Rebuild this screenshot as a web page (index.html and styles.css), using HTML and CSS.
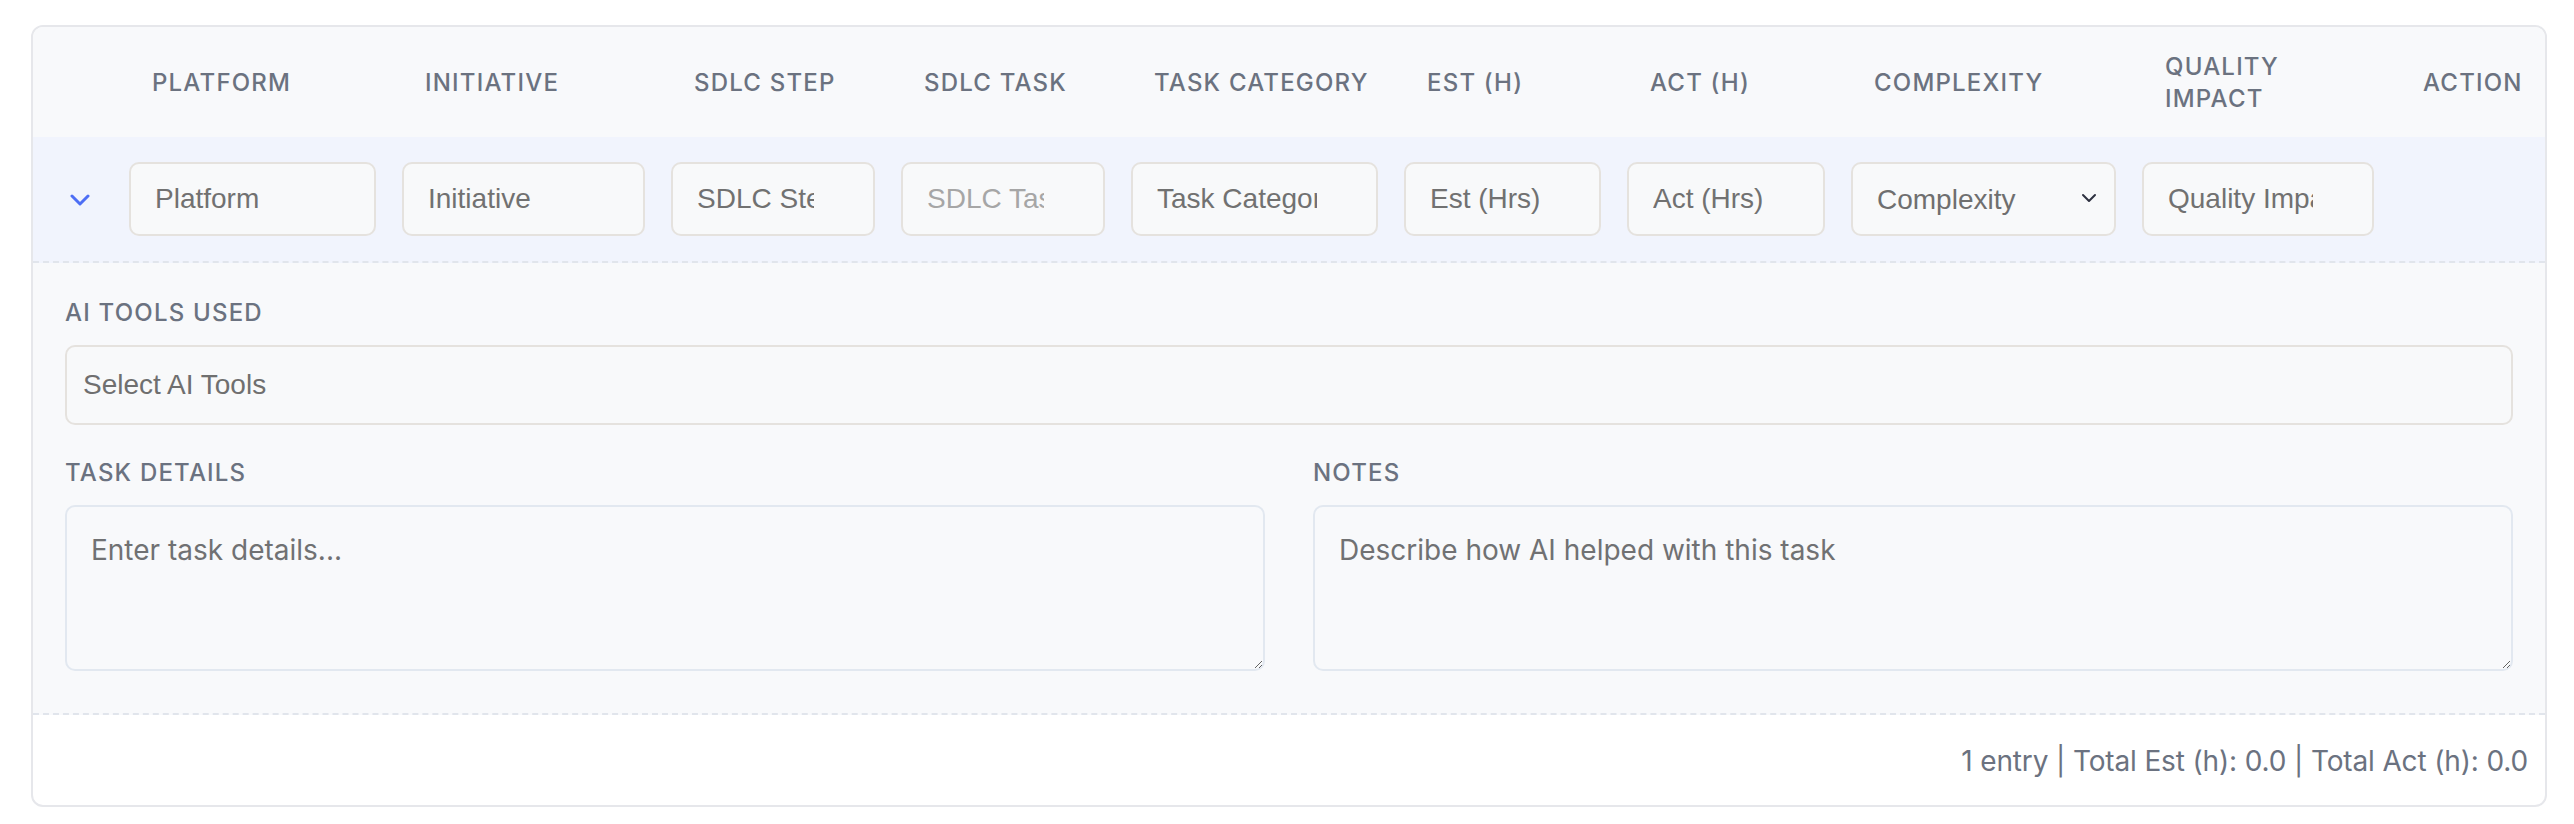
FILE: index.html
```html
<!DOCTYPE html>
<html lang="en">
<head>
<meta charset="utf-8">
<title>Task Entries</title>
<link rel="stylesheet" href="styles.css">
</head>
<body>
<div class="page">
  <div class="card">
    <div class="grid thead">
      <div class="th th-empty"></div>
      <div class="th">Platform</div>
      <div class="th">Initiative</div>
      <div class="th">SDLC Step</div>
      <div class="th">SDLC Task</div>
      <div class="th">Task Category</div>
      <div class="th">Est (h)</div>
      <div class="th">Act (h)</div>
      <div class="th">Complexity</div>
      <div class="th">Quality<br>Impact</div>
      <div class="th">Action</div>
    </div>
    <div class="grid row">
      <div class="td toggle">
        <svg class="toggle-icon" width="20" height="12" viewBox="0 0 20 12" aria-hidden="true"><polyline points="2,2 10,10 18,2" fill="none" stroke="#4d6ef5" stroke-width="3" stroke-linecap="round" stroke-linejoin="round"/></svg>
      </div>
      <div class="td"><input class="field" type="text" placeholder="Platform"></div>
      <div class="td"><input class="field" type="text" placeholder="Initiative"></div>
      <div class="td"><input class="field" type="text" placeholder="SDLC Step"></div>
      <div class="td"><input class="field field-disabled" type="text" placeholder="SDLC Task" disabled></div>
      <div class="td"><input class="field" type="text" placeholder="Task Category"></div>
      <div class="td"><input class="field" type="text" placeholder="Est (Hrs)"></div>
      <div class="td"><input class="field" type="text" placeholder="Act (Hrs)"></div>
      <div class="td">
        <div class="select-wrap">
          <select class="field select">
            <option>Complexity</option>
            <option>Low</option>
            <option>Medium</option>
            <option>High</option>
          </select>
          <svg class="select-icon" width="16" height="10" viewBox="0 0 16 10" aria-hidden="true"><polyline points="2,2 8,8 14,2" fill="none" stroke="#2e3140" stroke-width="2" stroke-linecap="round" stroke-linejoin="round"/></svg>
        </div>
      </div>
      <div class="td"><input class="field" type="text" placeholder="Quality Impact"></div>
      <div class="td"></div>
    </div>
    <div class="details">
      <label class="label">AI Tools Used</label>
      <div class="multi">Select AI Tools</div>
      <div class="two">
        <div class="col">
          <label class="label">Task Details</label>
          <textarea class="area" placeholder="Enter task details..."></textarea>
        </div>
        <div class="col">
          <label class="label">Notes</label>
          <textarea class="area" placeholder="Describe how AI helped with this task"></textarea>
        </div>
      </div>
    </div>
    <div class="footer">1 entry | Total Est (h): 0.0 | Total Act (h): 0.0</div>
  </div>
</div>
</body>
</html>
```

FILE: styles.css
```css
* {
  box-sizing: border-box;
}

body {
  margin: 0;
  background: #ffffff;
  font-family: Inter, "Liberation Sans", sans-serif;
}

.page {
  padding: 25px 27px 17px 31px;
}

.card {
  border: 2px solid #e6e7eb;
  border-radius: 12px;
  overflow: hidden;
  background: #ffffff;
}

.grid {
  display: grid;
  grid-template-columns: 83px 273px 269px 230px 230px 273px 223px 224px 291px 258px 1fr;
}

.thead {
  background: #f8f9fb;
  height: 110px;
  padding-top: 2px;
  align-items: center;
}

.th {
  padding-left: 36px;
  font-size: 24px;
  line-height: 32px;
  letter-spacing: 0.05em;
  text-transform: uppercase;
  color: #6b7280;
  font-weight: 500;
  white-space: nowrap;
}

.row {
  background: #f1f4fd;
  height: 126px;
  border-bottom: 2px dashed #e1e5ec;
  align-items: center;
}

.td {
  padding: 0 13px;
}

.toggle {
  padding-left: 37px;
  padding-top: 2px;
  display: flex;
  align-items: center;
}

.toggle-icon {
  display: block;
}

.field {
  display: block;
  width: 100%;
  height: 74px;
  border: 2px solid #e5e2de;
  border-radius: 10px;
  background: #f8f9fa;
  padding: 0 59px 0 24px;
  font-family: "Liberation Sans", Arial, sans-serif;
  font-size: 28px;
  color: #6f6f6f;
  outline: none;
  margin: 0;
}

.field::placeholder {
  color: #717171;
  opacity: 1;
}

.field-disabled::placeholder {
  color: #a6a6a6;
}

.select-wrap {
  position: relative;
}

.select {
  -webkit-appearance: none;
  appearance: none;
  padding-right: 48px;
}

.select-icon {
  position: absolute;
  right: 19px;
  top: 31px;
  display: block;
}

.details {
  background: #f8f9fb;
  padding: 34px 32px 42px;
  border-bottom: 2px dashed #e1e5ec;
}

.label {
  display: block;
  font-size: 24px;
  line-height: 32px;
  letter-spacing: 0.05em;
  text-transform: uppercase;
  color: #6b7280;
  font-weight: 500;
  margin-bottom: 16px;
}

.multi {
  height: 80px;
  border: 2px solid #e5e2de;
  border-radius: 10px;
  background: #f8f9fa;
  padding: 0 16px;
  display: flex;
  align-items: center;
  font-family: "Liberation Sans", Arial, sans-serif;
  font-size: 28px;
  color: #6f6f6f;
}

.two {
  display: grid;
  grid-template-columns: 1fr 1fr;
  gap: 48px;
  margin-top: 32px;
}

.area {
  display: block;
  width: 100%;
  height: 166px;
  border: 2px solid #e2e8f0;
  border-radius: 10px;
  background: #f8f9fb;
  padding: 22px 24px 19px;
  font-family: Inter, "Liberation Sans", sans-serif;
  font-size: 28px;
  line-height: 1.5;
  color: #6b7280;
  resize: vertical;
  outline: none;
  margin: 0;
}

.area::placeholder {
  color: #707173;
  opacity: 1;
}

.footer {
  height: 90px;
  display: flex;
  align-items: center;
  justify-content: flex-end;
  padding-right: 17px;
  padding-top: 2px;
  font-size: 28px;
  letter-spacing: -0.14px;
  color: #6b7280;
}
```
